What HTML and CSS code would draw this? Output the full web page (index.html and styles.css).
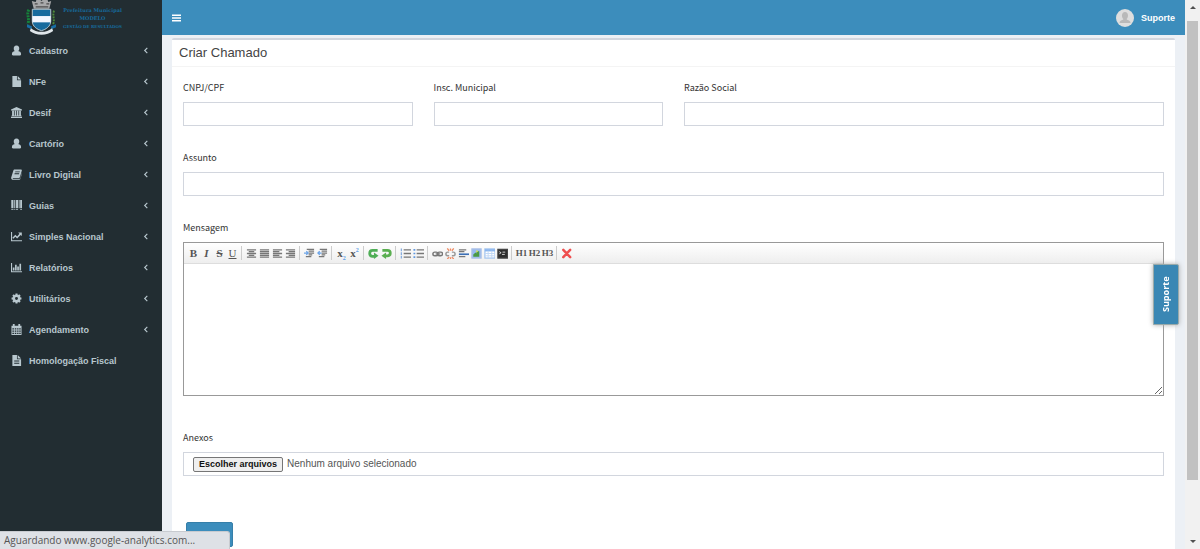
FILE: index.html
```html
<!DOCTYPE html>
<html lang="pt-BR">
<head>
<meta charset="utf-8">
<title>Criar Chamado</title>
<link rel="stylesheet" href="styles.css">
</head>
<body>
<svg class="sprite" aria-hidden="true">
  <symbol id="user" viewBox="0 0 12 12"><path d="M6 .5C8.200.5 9 2 9 3.800 9 5.200 8.400 6.200 7.800 6.600 10 7 11 8 11 10.200c0 .9-.5 1.300-1.200 1.300H2.200C1.500 11.500 1 11.100 1 10.200 1 8 2 7 4.200 6.600 3.600 6.200 3 5.200 3 3.800 3 2 3.800.5 6 .5z"/></symbol>
  <symbol id="file" viewBox="0 0 12 12"><path d="M1.500 0H6.500V4.500H11V12H1.500zM7.300 0 11 3.700H7.300z"/></symbol>
  <symbol id="filetext" viewBox="0 0 12 12"><path fill-rule="evenodd" d="M1.500 0H6.500V4.500H11V12H1.500zM7.300 0 11 3.700H7.300zM3.500 6v1.100H9V6zm0 2.500v1.100H9V8.500z"/></symbol>
  <symbol id="bank" viewBox="0 0 12 12"><path d="M6 0l6 2.600v1.200H0V2.600zM1.200 4.200h2v5h.8v-5h1.700v5h.8v-5h1.600v5h.8v-5h1.900v5h.7v.9H.6v-.9h.6zM0 10.500h12V12H0z"/></symbol>
  <symbol id="book" viewBox="0 0 12 12"><path fill-rule="evenodd" d="M4 .5h7c.7 0 1 .5.8 1.100L9.800 8.700c-.2.700-.6 1-1.300 1H2.300c-.6 0-.6.900.1.900h7c.4 0 .7-.2.800-.6L12 3.700c.2.400.1.700 0 1.100l-1.700 5.900c-.2.700-.7 1-1.300 1H2.200C.8 11.700-.2 10.500.3 9L2.500 2C2.700 1 3.300.5 4 .5zm.7 2.200-.3.900h5l.3-.9zM4 4.700l-.3.900h5l.3-.9z"/></symbol>
  <symbol id="barcode" viewBox="0 0 12 12"><path d="M.3 0h2.400v9H.3zM3.500 0h1.200v9H3.500zM5.500 0h2.200v9H5.500zM8.400 0h1v9h-1zM10 0h2v9h-2zM.3 10h2.400v1H.3zM3.500 10h1.200v1H3.500zM5.500 10h2.200v1H5.500zM10 10h2v1h-2z"/></symbol>
  <symbol id="line" viewBox="0 0 12 12"><path d="M0 1h1.200v9H12v1.200H0zM7.800 1.500h4v4l-1.300-1.200L6.700 8.300 4.700 6.300 2.700 8.500 1.500 7.300 4.700 4l2 2 2.500-3z"/></symbol>
  <symbol id="bars" viewBox="0 0 12 12"><path d="M0 1h1.200v9H12v1.200H0zM2 6h1.800v3.400H2zM4.400 3h1.800v6.400H4.400zM6.800 5h1.800v4.400H6.800zM9.200 2H11v7.400H9.200z"/></symbol>
  <symbol id="gear" viewBox="0 0 12 12"><circle cx="6" cy="6" r="3" fill="none" stroke="currentColor" stroke-width="2.800"/><path fill="none" stroke="currentColor" stroke-width="2.200" d="M6 .6v2M6 9.400v2M.6 6h2M9.400 6h2M2.200 2.200l1.400 1.400M8.400 8.400l1.400 1.400M9.800 2.200 8.400 3.600M3.600 8.400 2.200 9.800"/></symbol>
  <symbol id="calendar" viewBox="0 0 12 12"><path fill-rule="evenodd" d="M.5 2H2V0h2v2h4V0h2v2h1.500v10H.5zM1.500 4.500v1.500h1.700V4.500zm2.600 0v1.500h1.700V4.500zm2.600 0v1.500h1.500V4.500zm2.300 0v1.500h1.600V4.500zM1.500 7v1.500h1.700V7zm2.600 0v1.500h1.700V7zm2.600 0v1.500h1.500V7zM9 7v1.500h1.600V7zM1.500 9.500V11h1.700V9.500zm2.600 0V11h1.700V9.500zm2.600 0V11h1.500V9.500zm2.300 0V11h1.600V9.500z"/></symbol>
  <symbol id="angle" viewBox="0 0 6 8"><path d="M4.500 1 1.500 4l3 3" fill="none" stroke="currentColor" stroke-width="1.300"/></symbol>
  <symbol id="a-center" viewBox="0 0 12 12"><path d="M1 2h10M3 4h6M1 6h10M3 8h6M1 10h10"/></symbol>
  <symbol id="a-just" viewBox="0 0 12 12"><path d="M1 2h10M1 4h10M1 6h10M1 8h10M1 10h10"/></symbol>
  <symbol id="a-left" viewBox="0 0 12 12"><path d="M1 2h10M1 4h7M1 6h10M1 8h7M1 10h10"/></symbol>
  <symbol id="a-right" viewBox="0 0 12 12"><path d="M1 2h10M4 4h7M1 6h10M4 8h7M1 10h10"/></symbol>
  <symbol id="indent" viewBox="0 0 12 12"><path d="M3 1.500h8M5 3.500h6M5 5.500h6M5 7.500h4M2 9.500h6"/><path d="M0 5.500h4M2.500 3.500l2 2-2 2" stroke="#6da5e8"/></symbol>
  <symbol id="outdent" viewBox="0 0 12 12"><path d="M3 1.500h8M5 3.500h6M5 5.500h6M5 7.500h4M2 9.500h6"/><path d="M1 5.500h4M3 3.500l-2 2 2 2" stroke="#6da5e8"/></symbol>
  <symbol id="undo" viewBox="0 0 12 12"><path d="M10.500 2.500H5C.8 2.500.8 9 5 9h2" stroke="#4fae56" stroke-width="3"/><path d="M6.500 5 11.500 8.500l-5 3.500z" fill="#4fae56" stroke="none"/></symbol>
  <symbol id="redo" viewBox="0 0 12 12"><path d="M1.500 2.500H7C11.200 2.500 11.200 8.500 7 8.500H5" stroke="#5aae50" stroke-width="3"/><path d="M5.500 5 .5 8.500l5 3.500z" fill="#5aae50" stroke="none"/></symbol>
  <symbol id="ol" viewBox="0 0 12 12"><path d="M4 2h8M4 6h8M4 10h8"/><path d="M1.500.5v3M1.500 4.500v3M1.500 8.500v3" stroke="#88aee0"/></symbol>
  <symbol id="ul" viewBox="0 0 12 12"><path d="M4 2h8M4 6h8M4 10h8"/><path d="M.5 2h2M.5 6h2M.5 10h2" stroke="#5f98e0" stroke-width="1.800"/></symbol>
  <symbol id="link" viewBox="0 0 12 12"><rect x="1" y="4.500" width="5.500" height="4" rx="2" stroke-width="1.600"/><rect x="6" y="4.500" width="5.500" height="4" rx="2" stroke-width="1.600"/><path d="M4 6.500h5"/></symbol>
  <symbol id="unlink" viewBox="0 0 12 12"><path d="M4.500 4.500H3a2 2 0 0 0 0 4h1.500M7.500 4.500H9a2 2 0 0 1 0 4H7.500" stroke="#999" stroke-width="1.600"/><path d="M2.500.5 4.500 3M6 .5V3M9.500.5 7.500 3M2.500 12l2-2M6 12.500V10M9.500 12l-2-2" stroke="#ef8a62" stroke-width="1.400"/></symbol>
  <symbol id="rule" viewBox="0 0 12 12"><path d="M1 2h8M1 4h6M1 9.500h7"/><path d="M1 6.800h11" stroke="#3d70b6" stroke-width="1.800"/></symbol>
  <symbol id="image" viewBox="0 0 12 12"><rect x="1" y="1" width="10" height="10" fill="#98baf0" stroke="#aac0e6"/><path d="M2.500 9.500V7L5 5l1 1V3.500h3v6z" fill="#4b9943" stroke="none"/><circle cx="6.500" cy="3.500" r="1" fill="#dce35c" stroke="none"/></symbol>
  <symbol id="table" viewBox="0 0 12 12"><rect x="1" y="1" width="11" height="10" fill="#fff" stroke="#a5c6ef"/><path d="M1 2.500h11" stroke="#8bb6ee" stroke-width="2.500"/><path d="M4.500 3v8M8.500 3v8M1 6h11M1 8.500h11" stroke="#bed7f5" stroke-width="1"/></symbol>
  <symbol id="code" viewBox="0 0 12 12"><rect x="1" y="1.500" width="10.500" height="9.500" fill="#2d2d2d" stroke="#444"/><path d="M2.500 4l2 1.200-2 1.200M5.500 7h3M6 4.500h3" stroke="#ddd" stroke-width="1"/></symbol>
  <symbol id="cross" viewBox="0 0 12 12"><path d="M2.500 2l7.500 8M10 2 2.500 10" stroke="#ef4f4f" stroke-width="2.700" stroke-linecap="round"/></symbol>
</svg>

<div class="app">
  <aside class="sidebar">
    <a class="brand" href="#">
      <svg class="crest" viewBox="0 0 32 36" aria-hidden="true">
        <path d="M6 1l4 1 1-3h3l2 2 2-2h4l1 3 3-1-2 8H8z" fill="#a8a9aa"/>
        <path d="M9 4h3M15 3h3M21 4h3M10 7h13" stroke="#4d4d4d" stroke-width="1.300"/>
        <path d="M3 10c-3 5 1 8-1 15" fill="none" stroke="#16833b" stroke-width="3" stroke-dasharray="2 1"/>
        <path d="M29 11c-2 5 1 9-1 14" fill="none" stroke="#4f8a3b" stroke-width="2" stroke-dasharray="2 1"/>
        <path d="M6.500 9.500h19V22c0 5-5 8.500-9.500 9.500-4.500-1-9.500-4.500-9.500-9.500z" fill="#176a9e" stroke="#b6c8d2"/>
        <path d="M6.500 16.500h19V23h-19z" fill="#f3f6ff"/>
        <path d="M1 25l5 2v3l-5-2zM31 25l-5 2v3l5-2z" fill="#176da5"/>
        <path d="M5 29c6 5 16 5 22 0l1 3c-6 5-18 5-24 0z" fill="#dfe6ea"/>
      </svg>
      <span class="brand-text"><span>Prefeitura Municipal</span><span>MODELO</span><small>GESTÃO DE RESULTADOS</small></span>
    </a>
    <nav class="menu">
      <a href="#"><svg><use href="#user"/></svg><span>Cadastro</span><svg class="angle"><use href="#angle"/></svg></a>
      <a href="#"><svg><use href="#file"/></svg><span>NFe</span><svg class="angle"><use href="#angle"/></svg></a>
      <a href="#"><svg><use href="#bank"/></svg><span>Desif</span><svg class="angle"><use href="#angle"/></svg></a>
      <a href="#"><svg><use href="#user"/></svg><span>Cartório</span><svg class="angle"><use href="#angle"/></svg></a>
      <a href="#"><svg><use href="#book"/></svg><span>Livro Digital</span><svg class="angle"><use href="#angle"/></svg></a>
      <a href="#"><svg><use href="#barcode"/></svg><span>Guias</span><svg class="angle"><use href="#angle"/></svg></a>
      <a href="#"><svg><use href="#line"/></svg><span>Simples Nacional</span><svg class="angle"><use href="#angle"/></svg></a>
      <a href="#"><svg><use href="#bars"/></svg><span>Relatórios</span><svg class="angle"><use href="#angle"/></svg></a>
      <a href="#"><svg><use href="#gear"/></svg><span>Utilitários</span><svg class="angle"><use href="#angle"/></svg></a>
      <a href="#"><svg><use href="#calendar"/></svg><span>Agendamento</span><svg class="angle"><use href="#angle"/></svg></a>
      <a href="#"><svg><use href="#filetext"/></svg><span>Homologação Fiscal</span></a>
    </nav>
  </aside>

  <div class="main">
    <header class="topbar">
      <button class="toggle" type="button" aria-label="Menu"><svg viewBox="0 0 10 8"><path d="M0 1h10M0 4h10M0 7h10" stroke="#fff" stroke-width="1.800"/></svg></button>
      <a class="account" href="#">
        <svg viewBox="0 0 18 18" aria-hidden="true"><circle cx="9" cy="9" r="9" fill="#dedede"/><path d="M9 3c4 0 3.500 6 1.500 7 0 1 4 1 4 4H3.500c0-3 4-3 4-4C5.500 9 5 3 9 3z" fill="#b9b9b9"/></svg>
        <span>Suporte</span>
      </a>
    </header>
    <main class="content">
      <form class="panel">
        <h1>Criar Chamado</h1>
        <div class="fields">
          <div class="field quarter"><label for="doc">CNPJ/CPF</label><input id="doc" type="text"></div>
          <div class="field quarter"><label for="insc">Insc. Municipal</label><input id="insc" type="text"></div>
          <div class="field half"><label for="razao">Razão Social</label><input id="razao" type="text"></div>
          <div class="field"><label for="assunto">Assunto</label><input id="assunto" type="text"></div>
          <div class="field">
            <label for="mensagem">Mensagem</label>
            <div class="editor">
              <div class="toolbar">
                <div><button type="button"><b>B</b></button><button type="button"><b><i>I</i></b></button><button type="button"><b><s>S</s></b></button><button type="button"><u>U</u></button></div>
                <div><button type="button" aria-label="Centralizar"><svg><use href="#a-center"/></svg></button><button type="button" aria-label="Justificar"><svg><use href="#a-just"/></svg></button><button type="button" aria-label="Esquerda"><svg><use href="#a-left"/></svg></button><button type="button" aria-label="Direita"><svg><use href="#a-right"/></svg></button></div>
                <div><button type="button" aria-label="Aumentar recuo"><svg><use href="#indent"/></svg></button><button type="button" aria-label="Diminuir recuo"><svg><use href="#outdent"/></svg></button></div>
                <div><button type="button"><b>x<sub>2</sub></b></button><button type="button"><b>x<sup>2</sup></b></button></div>
                <div><button type="button" aria-label="Desfazer"><svg><use href="#undo"/></svg></button><button type="button" aria-label="Refazer"><svg><use href="#redo"/></svg></button></div>
                <div><button type="button" aria-label="Lista numerada"><svg><use href="#ol"/></svg></button><button type="button" aria-label="Lista"><svg><use href="#ul"/></svg></button></div>
                <div><button type="button" aria-label="Link"><svg><use href="#link"/></svg></button><button type="button" aria-label="Remover link"><svg><use href="#unlink"/></svg></button><button type="button" aria-label="Linha"><svg><use href="#rule"/></svg></button><button type="button" aria-label="Imagem"><svg><use href="#image"/></svg></button><button type="button" aria-label="Tabela"><svg><use href="#table"/></svg></button><button type="button" aria-label="Código"><svg><use href="#code"/></svg></button></div>
                <div class="heads"><button type="button">H1</button><button type="button">H2</button><button type="button">H3</button></div>
                <div><button type="button" aria-label="Limpar"><svg><use href="#cross"/></svg></button></div>
              </div>
              <textarea id="mensagem"></textarea>
            </div>
          </div>
          <div class="field attach">
            <label for="anexos">Anexos</label>
            <label class="filebox" for="anexos"><input id="anexos" type="file" multiple><span class="choose">Escolher arquivos</span><span>Nenhum arquivo selecionado</span></label>
          </div>
        </div>
        <button class="save" type="submit">Salvar</button>
      </form>
    </main>
  </div>

  <div class="scrollbar" aria-hidden="true"><i class="up"></i><div class="track"><div class="thumb"></div></div><i class="down"></i></div>
</div>
<button class="support" type="button">Suporte</button>
<div class="status">Aguardando www.google-analytics.com...</div>
</body>
</html>
```
FILE: styles.css
```css
* { box-sizing: border-box; }
body { margin: 0; overflow: hidden; font-family: "Liberation Sans", Arial, sans-serif; font-size: 10px; color: #444; }
button { font: inherit; cursor: pointer; }
a { color: inherit; text-decoration: none; }
.sprite { position: absolute; width: 0; height: 0; }
.app { display: flex; height: 100vh; overflow: hidden; }

.sidebar { flex: 0 0 162px; background: #222d32; color: #b8c7ce; }
.brand { display: flex; gap: 6px; height: 35px; padding-left: 26px; color: #176a9b; }
.crest { width: 31px; height: 35px; }
.brand-text { display: flex; flex-direction: column; align-items: center; padding-top: 6px; font: bold 5px/8px "DejaVu Serif", serif; }
.brand-text small { font-size: 4px; line-height: 10px; }
.menu a { display: flex; align-items: center; gap: 7px; height: 31px; padding: 0 12px 0 11px; font-size: 9px; font-weight: bold; }
.menu svg { width: 11px; height: 11px; fill: currentColor; }
.menu .angle { width: 8px; height: 7px; margin-left: auto; }

.main { flex: 1; min-width: 0; background: #ecf0f5; }
.topbar { display: flex; align-items: center; justify-content: space-between; height: 35px; padding: 0 10px; background: #3c8dbc; color: #fff; }
.toggle { display: flex; padding: 0; border: 0; background: none; }
.toggle svg { width: 9px; height: 8px; }
.account { display: flex; align-items: center; gap: 7px; font-size: 9px; font-weight: bold; }
.account svg { width: 18px; height: 18px; }
.content { padding: 3px 10px 0; }
.panel { height: 620px; border-top: 2px solid #d2d6de; border-radius: 2px; background: #fff; }
h1 { margin: 0; padding: 5px 7px 6px; border-bottom: 1px solid #f4f4f4; font-size: 13px; line-height: 15px; font-weight: normal; }
.fields { display: grid; grid-template-columns: repeat(12, 1fr); column-gap: 21px; row-gap: 24px; padding: 13px 11px 0; }
.field { grid-column: span 12; display: flex; flex-direction: column; gap: 6px; min-width: 0; font-family: "Noto Sans CJK SC", "Open Sans", sans-serif; font-size: 9px; line-height: 16px; color: #333; }
.quarter { grid-column: span 3; }
.half { grid-column: span 6; }
.field > input, .filebox { width: 100%; height: 24px; padding: 0 9px; border: 1px solid #d2d6de; background: #fff; }
.attach { padding-top: 10px; }

.editor { height: 154px; display: flex; flex-direction: column; border: 1px solid #999; background: #fff; }
.toolbar { display: flex; height: 21px; padding: 0 3px; border-bottom: 1px solid #ddd; background: linear-gradient(#fff, #eee); }
.toolbar div { display: flex; align-items: center; }
.toolbar div + div::before { content: ""; width: 1px; height: 14px; margin: 0 3px 0 2px; background: #ccc; }
.toolbar button { display: flex; align-items: center; justify-content: center; width: 13px; height: 16px; padding: 0; border: 0; background: none; font: 11px/12px "Liberation Serif", serif; color: #555; }
.toolbar svg { width: 11px; height: 11px; fill: none; stroke: #777; stroke-width: 1.4; overflow: visible; }
.toolbar sub, .toolbar sup { font-size: 6px; line-height: 1px; color: #5c9de8; }
.toolbar .heads button { font-size: 9px; font-weight: bold; }
.editor textarea { flex: 1; width: 100%; padding: 4px; border: 0; outline: 0; resize: vertical; }

.filebox { position: relative; display: flex; align-items: center; gap: 4px; font-family: "Liberation Sans", Arial, sans-serif; font-size: 10px; color: #555; }
.filebox input { position: absolute; width: 1px; height: 1px; opacity: 0; }
.choose { padding: 0 5px; border: 1px solid #767676; border-radius: 2px; background: #efefef; color: #111; font-size: 9px; font-weight: bold; line-height: 13px; }
.save { margin: 46px 0 0 14px; height: 25px; padding: 0 9px; border: 1px solid #367fa9; border-radius: 2px; background: #3c8dbc; color: #fff; font-size: 9px; font-weight: bold; }

.scrollbar { flex: 0 0 15px; display: flex; flex-direction: column; align-items: center; justify-content: space-between; padding: 6px 0; background: #f1f1f1; }
.track { flex: 1; width: 11px; padding: 12px 0 60px; }
.thumb { height: 100%; background: #c1c1c1; }
.up, .down { border: 3px solid transparent; }
.up { border-top: 0; border-bottom-color: #505050; }
.down { border-bottom: 0; border-top-color: #505050; }
.support { position: fixed; right: 21px; top: 264px; width: 26px; height: 61px; padding: 0; border: 1px solid #9aa; border-radius: 2px 0 0 2px; background: #3a87b4; color: #fff; font: bold 9px "Open Sans", sans-serif; writing-mode: vertical-rl; transform: rotate(180deg); box-shadow: 0 0 5px #aaa; }
.status { position: fixed; left: 0; bottom: 0; width: 230px; height: 18px; padding: 0 4px; border: 1px solid #c8cbd0; border-width: 1px 1px 0 0; border-radius: 0 3px 0 0; background: #dee1e6; color: #555; font: 10px/17px "Open Sans", sans-serif; }
```
